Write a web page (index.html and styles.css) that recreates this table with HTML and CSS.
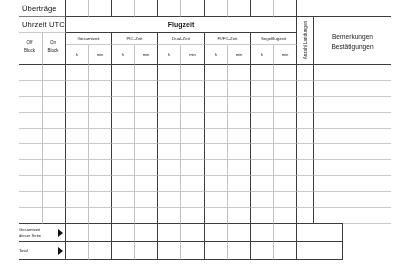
FILE: index.html
```html
<!DOCTYPE html>
<html lang="de">
<head>
<meta charset="utf-8">
<title>Flugbuch</title>
<link rel="stylesheet" href="styles.css">
</head>
<body>
<div class="log">
  <!-- row 1: Überträge -->
  <div class="cell span2 rb bm label-l big">Überträge</div>
  <div class="cell rt bb"></div><div class="cell rb bb"></div>
  <div class="cell rt bb"></div><div class="cell rb bb"></div>
  <div class="cell rt bb"></div><div class="cell rb bb"></div>
  <div class="cell rt bb"></div><div class="cell rb bb"></div>
  <div class="cell rt bb"></div><div class="cell rb bb"></div>
  <div class="cell span3 bb"></div>

  <!-- row 2 -->
  <div class="cell span2 rb bt label-l big">Uhrzeit UTC</div>
  <div class="cell span10 rb bb center title">Flugzeit</div>
  <div class="cell rows3 rb bb center"><span class="vert">Anzahl Landungen</span></div>
  <div class="cell span2 rows3 bb center remarks"><span>Bemerkungen</span><span>Bestätigungen</span></div>

  <!-- row 3 -->
  <div class="cell rows2 rt bb center block">Off<br>Block</div>
  <div class="cell rows2 rb bb center block">On<br>Block</div>
  <div class="cell span2 rb bt center small">Gesamtzeit</div>
  <div class="cell span2 rb bt center small">PIC-Zeit</div>
  <div class="cell span2 rb bt center small">Dual-Zeit</div>
  <div class="cell span2 rb bt center small">FI/FC-Zeit</div>
  <div class="cell span2 rb bt center small">Segelflugzeit</div>

  <!-- row 4 -->
  <div class="cell rt bb center tiny">h</div><div class="cell rb bb center tiny">min</div>
  <div class="cell rt bb center tiny">h</div><div class="cell rb bb center tiny">min</div>
  <div class="cell rt bb center tiny">h</div><div class="cell rb bb center tiny">min</div>
  <div class="cell rt bb center tiny">h</div><div class="cell rb bb center tiny">min</div>
  <div class="cell rt bb center tiny">h</div><div class="cell rb bb center tiny">min</div>

  <!-- body rows 1-9 -->
  <div class="cell rt bt"></div><div class="cell rb bt"></div><div class="cell rt bt"></div><div class="cell rb bt"></div><div class="cell rt bt"></div><div class="cell rb bt"></div><div class="cell rt bt"></div><div class="cell rb bt"></div><div class="cell rt bt"></div><div class="cell rb bt"></div><div class="cell rt bt"></div><div class="cell rb bt"></div><div class="cell rb bt"></div><div class="cell span2 bt"></div>
  <div class="cell rt bt"></div><div class="cell rb bt"></div><div class="cell rt bt"></div><div class="cell rb bt"></div><div class="cell rt bt"></div><div class="cell rb bt"></div><div class="cell rt bt"></div><div class="cell rb bt"></div><div class="cell rt bt"></div><div class="cell rb bt"></div><div class="cell rt bt"></div><div class="cell rb bt"></div><div class="cell rb bt"></div><div class="cell span2 bt"></div>
  <div class="cell rt bt"></div><div class="cell rb bt"></div><div class="cell rt bt"></div><div class="cell rb bt"></div><div class="cell rt bt"></div><div class="cell rb bt"></div><div class="cell rt bt"></div><div class="cell rb bt"></div><div class="cell rt bt"></div><div class="cell rb bt"></div><div class="cell rt bt"></div><div class="cell rb bt"></div><div class="cell rb bt"></div><div class="cell span2 bt"></div>
  <div class="cell rt bt"></div><div class="cell rb bt"></div><div class="cell rt bt"></div><div class="cell rb bt"></div><div class="cell rt bt"></div><div class="cell rb bt"></div><div class="cell rt bt"></div><div class="cell rb bt"></div><div class="cell rt bt"></div><div class="cell rb bt"></div><div class="cell rt bt"></div><div class="cell rb bt"></div><div class="cell rb bt"></div><div class="cell span2 bt"></div>
  <div class="cell rt bt"></div><div class="cell rb bt"></div><div class="cell rt bt"></div><div class="cell rb bt"></div><div class="cell rt bt"></div><div class="cell rb bt"></div><div class="cell rt bt"></div><div class="cell rb bt"></div><div class="cell rt bt"></div><div class="cell rb bt"></div><div class="cell rt bt"></div><div class="cell rb bt"></div><div class="cell rb bt"></div><div class="cell span2 bt"></div>
  <div class="cell rt bt"></div><div class="cell rb bt"></div><div class="cell rt bt"></div><div class="cell rb bt"></div><div class="cell rt bt"></div><div class="cell rb bt"></div><div class="cell rt bt"></div><div class="cell rb bt"></div><div class="cell rt bt"></div><div class="cell rb bt"></div><div class="cell rt bt"></div><div class="cell rb bt"></div><div class="cell rb bt"></div><div class="cell span2 bt"></div>
  <div class="cell rt bt"></div><div class="cell rb bt"></div><div class="cell rt bt"></div><div class="cell rb bt"></div><div class="cell rt bt"></div><div class="cell rb bt"></div><div class="cell rt bt"></div><div class="cell rb bt"></div><div class="cell rt bt"></div><div class="cell rb bt"></div><div class="cell rt bt"></div><div class="cell rb bt"></div><div class="cell rb bt"></div><div class="cell span2 bt"></div>
  <div class="cell rt bt"></div><div class="cell rb bt"></div><div class="cell rt bt"></div><div class="cell rb bt"></div><div class="cell rt bt"></div><div class="cell rb bt"></div><div class="cell rt bt"></div><div class="cell rb bt"></div><div class="cell rt bt"></div><div class="cell rb bt"></div><div class="cell rt bt"></div><div class="cell rb bt"></div><div class="cell rb bt"></div><div class="cell span2 bt"></div>
  <div class="cell rt bt"></div><div class="cell rb bt"></div><div class="cell rt bt"></div><div class="cell rb bt"></div><div class="cell rt bt"></div><div class="cell rb bt"></div><div class="cell rt bt"></div><div class="cell rb bt"></div><div class="cell rt bt"></div><div class="cell rb bt"></div><div class="cell rt bt"></div><div class="cell rb bt"></div><div class="cell rb bt"></div><div class="cell span2 bt"></div>
  <!-- body row 10 -->
  <div class="cell rt bb"></div><div class="cell rb bb"></div><div class="cell rt bb"></div><div class="cell rb bb"></div><div class="cell rt bb"></div><div class="cell rb bb"></div><div class="cell rt bb"></div><div class="cell rb bb"></div><div class="cell rt bb"></div><div class="cell rb bb"></div><div class="cell rt bb"></div><div class="cell rb bb"></div><div class="cell rb bb"></div><div class="cell bb"></div><div class="cell bt"></div>

  <!-- totals -->
  <div class="cell span2 rb bb sum"><span class="sum-text">Gesamtzeit<br>dieser Seite</span><span class="arrow"></span></div>
  <div class="cell rt bb"></div><div class="cell rb bb"></div><div class="cell rt bb"></div><div class="cell rb bb"></div><div class="cell rt bb"></div><div class="cell rb bb"></div><div class="cell rt bb"></div><div class="cell rb bb"></div><div class="cell rt bb"></div><div class="cell rb bb"></div>
  <div class="cell span2 rb bb"></div><div class="cell"></div>

  <div class="cell span2 rb bb sum"><span class="sum-text">Total</span><span class="arrow"></span></div>
  <div class="cell rt bb"></div><div class="cell rb bb"></div><div class="cell rt bb"></div><div class="cell rb bb"></div><div class="cell rt bb"></div><div class="cell rb bb"></div><div class="cell rt bb"></div><div class="cell rb bb"></div><div class="cell rt bb"></div><div class="cell rb bb"></div>
  <div class="cell span2 rb bb"></div><div class="cell"></div>
</div>
</body>
</html>
```

FILE: styles.css
```css
html, body {
  margin: 0;
  padding: 0;
  background: #ffffff;
}

body {
  font-family: "Liberation Sans", Arial, sans-serif;
  color: #000000;
}

.log {
  display: grid;
  margin-left: 19px;
  width: 372px;
  grid-template-columns: 24px 23px 23px 23px 23px 23px 23px 24px 23px 23px 23px 23px 17px 29px 48px;
  grid-template-rows: 17px 16px 12px 20px 16px 16px 16px 16px 15px 16px 16px 16px 16px 16px 18px 18px;
  filter: grayscale(1);
}

.cell {
  box-sizing: border-box;
  min-width: 0;
  min-height: 0;
  overflow: hidden;
}

.span2 { grid-column: span 2; }
.span3 { grid-column: span 3; }
.span10 { grid-column: span 10; }
.rows2 { grid-row: span 2; }
.rows3 { grid-row: span 3; }

.rt { border-right: 1px solid #c2c2c2; }
.rb { border-right: 1px solid #3c3c3c; }
.bt { border-bottom: 1px solid #cacaca; }
.bb { border-bottom: 1px solid #3c3c3c; }
.bm { border-bottom: 1px solid #7a7a7a; }

.center {
  display: flex;
  align-items: center;
  justify-content: center;
  text-align: center;
}

.label-l {
  display: flex;
  align-items: center;
  padding-left: 3px;
}

.big {
  font-size: 7.6px;
  letter-spacing: 0.1px;
  color: #111111;
}

.title {
  font-size: 7px;
  font-weight: bold;
  color: #1a1a1a;
}

.small {
  font-size: 4.4px;
  color: #222222;
}

.tiny {
  font-size: 4.2px;
  color: #222222;
}

.block {
  font-size: 4.5px;
  line-height: 8px;
  color: #222222;
  padding-right: 2px;
  padding-bottom: 3px;
}

.vert {
  writing-mode: vertical-rl;
  transform: rotate(180deg);
  font-size: 4.6px;
  color: #222222;
  white-space: nowrap;
}

.remarks {
  flex-direction: column;
  font-size: 6.6px;
  line-height: 10px;
  color: #222222;
  padding-top: 3px;
}

.sum {
  display: flex;
  align-items: center;
  justify-content: space-between;
  padding-right: 2px;
}

.sum-text {
  font-size: 4.2px;
  line-height: 6px;
  color: #222222;
}

.arrow {
  width: 0;
  height: 0;
  border-left: 5px solid #111111;
  border-top: 4.5px solid transparent;
  border-bottom: 4.5px solid transparent;
}
```
